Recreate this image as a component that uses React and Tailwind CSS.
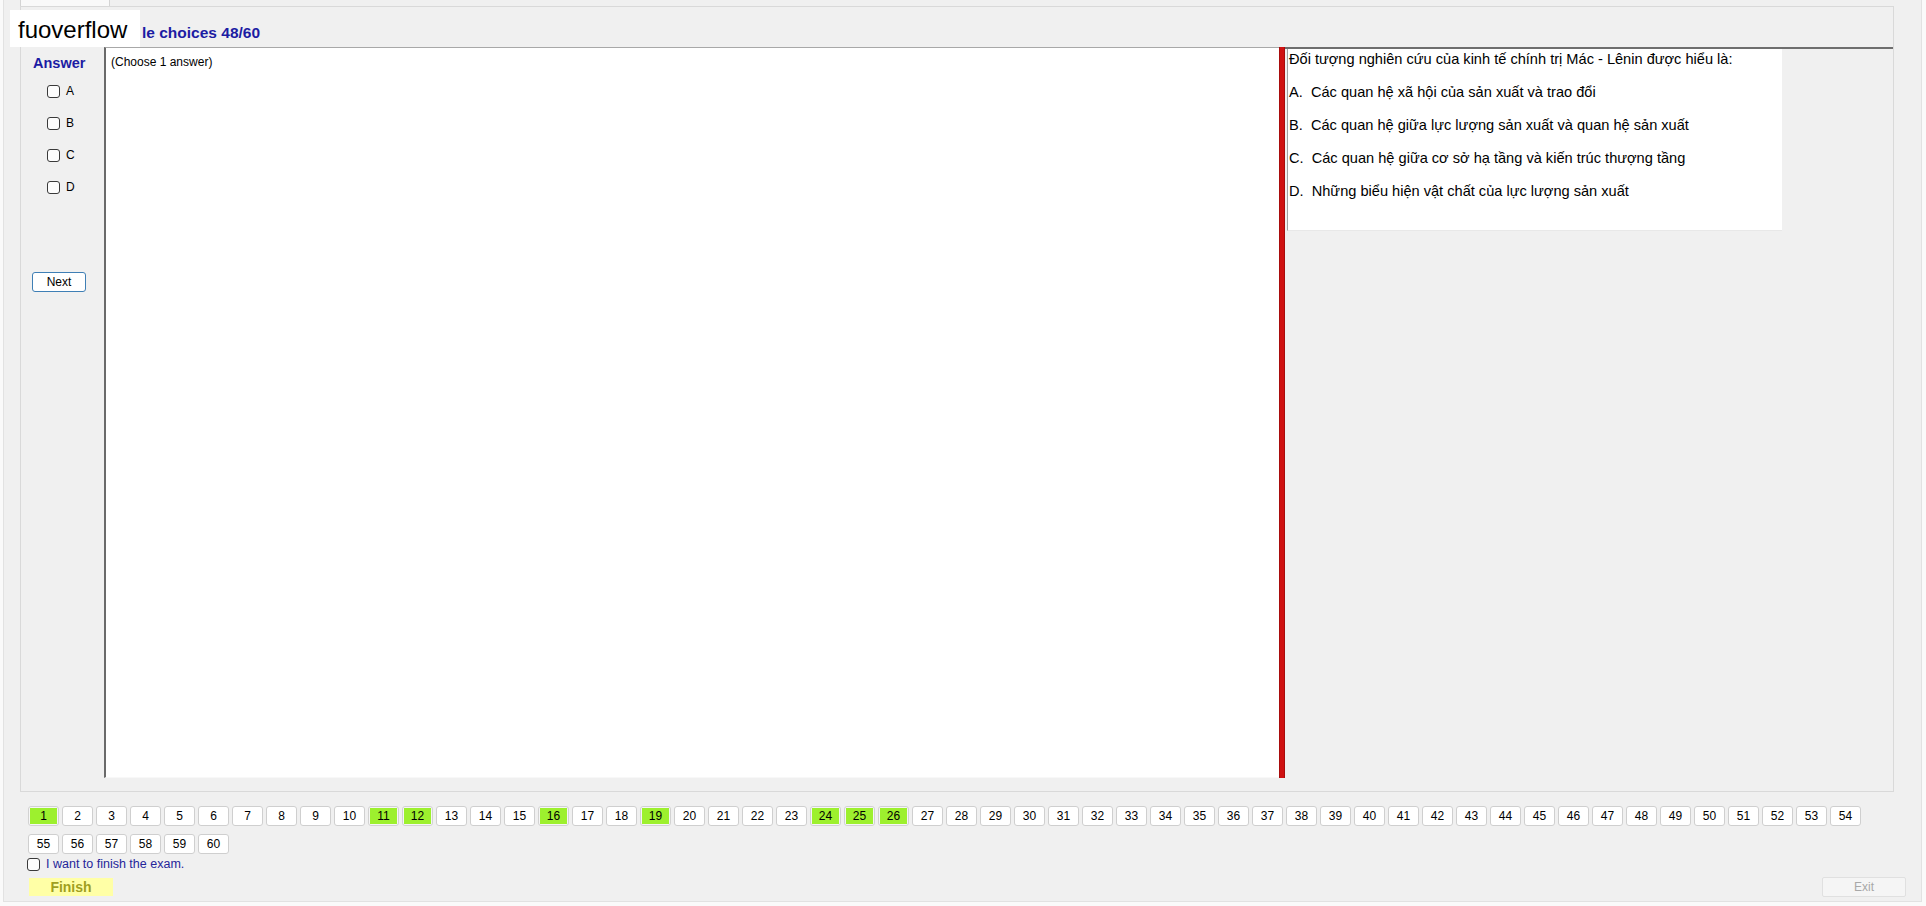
const GREEN = new Set([1, 11, 12, 16, 19, 24, 25, 26]);

function Box({ className = "" }) {
  return (
    <span
      className={
        "inline-block w-[13px] h-[13px] shrink-0 rounded-[3px] border border-[#3a3a3a] bg-[#fdfdfd] " +
        className
      }
    />
  );
}

export default function App() {
  const nums = Array.from({ length: 60 }, (_, i) => i + 1);
  const letters = ["A", "B", "C", "D"];
  const options = [
    "A.\u00a0 Các quan hệ xã hội của sản xuất và trao đổi",
    "B.\u00a0 Các quan hệ giữa lực lượng sản xuất và quan hệ sản xuất",
    "C.\u00a0 Các quan hệ giữa cơ sở hạ tầng và kiến trúc thượng tầng",
    "D.\u00a0 Những biểu hiện vật chất của lực lượng sản xuất",
  ];
  return (
    <div className="relative w-[1926px] h-[906px] overflow-hidden bg-[#fafafa] font-['Liberation_Sans',Arial,sans-serif] text-black">
      <div className="ml-[3px] w-[1919px] h-[902px] bg-[#f0f0f0] border-l border-r border-b border-[#e2e2e2] flex flex-col">
        {/* tab strip */}
        <div className="h-[6px] flex">
          <div className="ml-[16px] w-[90px] h-[6px] border-l border-r border-[#d4d4d4] bg-[#f9f9f9]" />
        </div>

        {/* main panel */}
        <div className="ml-[16px] w-[1874px] h-[786px] border border-[#d9d9d9] flex flex-col">
          <div className="h-[40px] pl-[121px] pt-[17px]">
            <span className="text-[15.5px] leading-[17px] font-bold text-[#1c1ca3] block">
              le choices 48/60
            </span>
          </div>

          <div className="flex h-[731px]">
            {/* left answer column */}
            <div className="w-[83px] shrink-0 flex flex-col pl-[12px] pt-[8px]">
              <div className="text-[14.5px] leading-[16px] font-bold text-[#1c1ca3]">Answer</div>
              <div className="mt-[14px] flex flex-col gap-[19px]">
                {letters.map((l) => (
                  <div key={l} className="flex items-center h-[13px] ml-[14px]">
                    <Box />
                    <span className="ml-[6px] text-[12px] leading-[13px]">{l}</span>
                  </div>
                ))}
              </div>
              <button className="mt-[78px] -ml-[1px] w-[54px] h-[20px] rounded-[3px] border border-[#3f7fb5] bg-white text-[12px] leading-none flex items-center justify-center">
                Next
              </button>
            </div>

            {/* white work area */}
            <div className="w-[1175px] shrink-0 bg-white border-l-2 border-l-[#6a6a6a] border-t border-t-[#a8a8a8] border-b border-b-[#f8f8f8] pl-[5px] pt-[7px]">
              <div className="text-[12px] leading-[14px]">(Choose 1 answer)</div>
            </div>

            {/* red splitter */}
            <div className="w-[6px] shrink-0 bg-[#cf1111] border-x border-[#a80c0c]" />

            {/* right question panel */}
            <div className="flex-1 border-t-2 border-[#6e6e6e]">
              <div className="ml-[2px] w-[495px] h-[182px] bg-white border-l border-[#a0a0a0] border-b border-b-[#e8e8e8] pl-[1px] text-[14.6px]">
                <div className="leading-[20px]">
                  Đối tượng nghiên cứu của kinh tế chính trị Mác - Lênin được hiểu là:
                </div>
                {options.map((o) => (
                  <div key={o} className="leading-[20px] mt-[13px]">
                    {o}
                  </div>
                ))}
              </div>
            </div>
          </div>
        </div>

        {/* bottom section */}
        <div className="pl-[24px] pr-[15px] mt-[14px] flex flex-col">
          <div className="flex flex-wrap w-[1840px] gap-x-[3px] gap-y-[8px]">
            {nums.map((n) =>
              GREEN.has(n) ? (
                <div
                  key={n}
                  className="w-[31px] h-[20px] rounded-[3px] border border-[#d2d2d2] bg-[#f6f6f6] p-[1px]"
                >
                  <div className="w-full h-full bg-[#9df02e] text-[12px] leading-none flex items-center justify-center">
                    {n}
                  </div>
                </div>
              ) : (
                <div
                  key={n}
                  className="w-[31px] h-[20px] rounded-[3px] border border-[#cfcfcf] bg-white text-[12px] leading-none flex items-center justify-center"
                >
                  {n}
                </div>
              )
            )}
          </div>
          <div className="mt-[4px] -ml-[1px] flex items-center h-[13px]">
            <Box />
            <span className="ml-[6px] text-[12.5px] leading-[13px] text-[#25259a]">
              I want to finish the exam.
            </span>
          </div>
          <div className="mt-[6px] flex items-center justify-between">
            <div className="ml-[1px] w-[84px] h-[18px] bg-[#ffffa6] text-[#9f9f1f] font-bold text-[14px] leading-none flex items-center justify-center">
              Finish
            </div>
            <div className="w-[84px] h-[20px] rounded-[2px] border border-[#e0e0e0] bg-[#f5f5f5] text-[#a8a8a8] text-[12px] leading-none flex items-center justify-center">
              Exit
            </div>
          </div>
        </div>
      </div>

      {/* overlay watermark label */}
      <div className="absolute left-[10px] top-[10px] w-[130px] h-[37px] bg-white pl-[8px] pt-[6px] text-[24px] leading-[28px] text-black">
        fuoverflow
      </div>
    </div>
  );
}
